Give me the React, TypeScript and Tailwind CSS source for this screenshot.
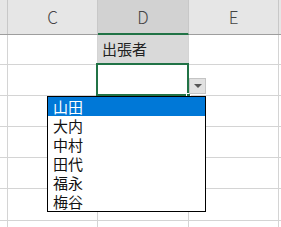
import React from "react";

const jp = { fontFamily: '"Noto Sans CJK JP", "Noto Sans", sans-serif' };

export default function App() {
  const rows = [30, 31, 31, 31, 31, 32, 31];
  const items = ["山田", "大内", "中村", "田代", "福永", "梅谷"];
  return (
    <div className="relative w-[281px] h-[227px] overflow-hidden bg-white" style={jp}>
      {/* header */}
      <div className="flex h-[35px] border-b border-[#9e9e9e] bg-[#e6e6e6] text-[17px] text-[#444] font-light">
        <div className="w-[8px] border-r border-[#c8c8c8]" />
        <div className="w-[90px] border-r border-[#c8c8c8] flex items-center justify-center">C</div>
        <div className="w-[91px] border-r border-[#c8c8c8] bg-[#d2d2d2] border-b-2 border-b-[#217346] -mb-px flex items-center justify-center">D</div>
        <div className="w-[90px] border-r border-[#c8c8c8] flex items-center justify-center">E</div>
        <div className="flex-1" />
      </div>
      {rows.map((h, i) => (
        <div key={i} className="flex border-b border-[#d4d4d4]" style={{ height: h }}>
          <div className="w-[8px] border-r border-[#d4d4d4]" />
          <div className="w-[90px] border-r border-[#d4d4d4]" />
          <div
            className={
              "w-[91px] border-r border-[#d4d4d4] flex items-center pl-[4px] text-[15px] text-[#222] " +
              (i === 0 ? "bg-[#d9d9d9]" : "")
            }
          >
            {i === 0 ? "出張者" : ""}
          </div>
          <div className="w-[90px] border-r border-[#d4d4d4]" />
          <div className="flex-1" />
        </div>
      ))}
      {/* selection border */}
      <div className="absolute left-[96px] top-[63px] w-[93px] h-[33px] border-2 border-[#217346]" />
      <div className="absolute left-[186px] top-[93px] w-[5px] h-[5px] bg-[#217346] border border-white" />
      {/* dropdown button */}
      <div className="absolute left-[189px] top-[78px] w-[17px] h-[16px] bg-[#e1e1e1] border border-[#c4c4c4] flex items-center justify-center">
        <div className="w-0 h-0 border-l-[4px] border-r-[4px] border-t-[4px] border-l-transparent border-r-transparent border-t-[#555]" />
      </div>
      {/* list */}
      <div className="absolute left-[47px] top-[96px] w-[159px] border border-black bg-white text-[15px] leading-[19px] text-[#111]">
        {items.map((t, i) => (
          <div
            key={t}
            className={"h-[19px] pl-[5px] " + (i === 0 ? "bg-[#0078d7] text-white" : "")}
          >
            {t}
          </div>
        ))}
      </div>
    </div>
  );
}
